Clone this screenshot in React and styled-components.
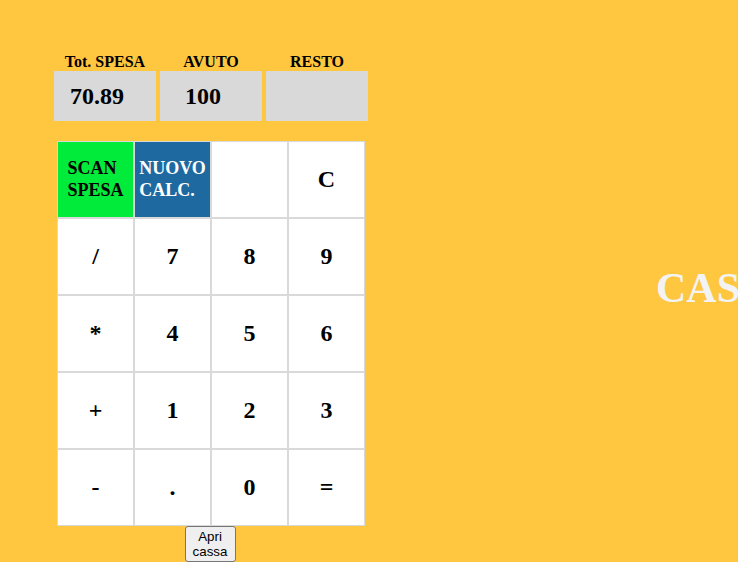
import React from "react";
import styled, { createGlobalStyle } from "styled-components";

const Global = createGlobalStyle`
  html, body {
    margin: 0;
    padding: 0;
    background: #ffc640;
    overflow: hidden;
  }
  body {
    font-family: "Liberation Serif", "Times New Roman", serif;
  }
`;

const Page = styled.div`
  display: flex;
  align-items: flex-start;
  width: 100vw;
  height: 100vh;
  overflow: hidden;
  padding: 53px 0 0 54px;
  box-sizing: border-box;
`;

const Calc = styled.div`
  display: flex;
  flex-direction: column;
  width: 314px;
  flex: none;
`;

const Header = styled.div`
  display: grid;
  grid-template-columns: repeat(3, 102px);
  column-gap: 4px;
`;

const Field = styled.div`
  display: flex;
  flex-direction: column;
`;

const Label = styled.div`
  font-weight: bold;
  font-size: 16px;
  line-height: 17px;
  text-align: center;
  margin-bottom: 1px;
  color: #000;
`;

const Display = styled.div`
  height: 50px;
  background: #d9d9d9;
  display: flex;
  align-items: center;
  justify-content: center;
  padding-right: 16px;
  box-sizing: border-box;
  font-weight: bold;
  font-size: 24px;
  color: #000;
`;

const Keypad = styled.div`
  display: grid;
  grid-template-columns: repeat(4, 77px);
  grid-auto-rows: 77px;
  margin: 20px 0 0 3px;
`;

const Key = styled.div`
  box-sizing: border-box;
  border: 1px solid #d9d9d9;
  background: ${(p) => p.$bg || "#ffffff"};
  color: ${(p) => p.$fg || "#000"};
  display: flex;
  align-items: center;
  justify-content: center;
  font-weight: bold;
  font-size: ${(p) => (p.$small ? "18px" : "24px")};
  line-height: ${(p) => (p.$small ? "21.5px" : "normal")};
  text-align: left;
`;

const ButtonRow = styled.div`
  display: flex;
  justify-content: center;
  margin-left: 2px;
  width: 308px;
`;

const OpenButton = styled.button`
  width: 51px;
  box-sizing: border-box;
  padding: 2px 6px;
  font-family: "Liberation Sans", Arial, sans-serif;
  font-size: 13.33px;
  line-height: 15px;
  color: #000;
  background: #efefef;
  border: 1px solid #767676;
  border-radius: 3px;
`;

const Title = styled.h1`
  margin: 211px 0 0 288px;
  font-size: 42px;
  font-weight: bold;
  color: #f3f3f3;
  white-space: nowrap;
  line-height: normal;
`;

const keys = [
  { t: "SCAN SPESA", bg: "#00eb3a", small: true, lines: ["SCAN", "SPESA"] },
  { t: "NUOVO CALC.", bg: "#1e6aa0", fg: "#ffffff", small: true, lines: ["NUOVO", "CALC."] },
  { t: "" },
  { t: "C" },
  { t: "/" }, { t: "7" }, { t: "8" }, { t: "9" },
  { t: "*" }, { t: "4" }, { t: "5" }, { t: "6" },
  { t: "+" }, { t: "1" }, { t: "2" }, { t: "3" },
  { t: "-" }, { t: "." }, { t: "0" }, { t: "=" },
];

export default function App() {
  return (
    <>
      <Global />
      <Page>
        <Calc>
          <Header>
            <Field>
              <Label>Tot. SPESA</Label>
              <Display>70.89</Display>
            </Field>
            <Field>
              <Label>AVUTO</Label>
              <Display>100</Display>
            </Field>
            <Field>
              <Label>RESTO</Label>
              <Display />
            </Field>
          </Header>
          <Keypad>
            {keys.map((k, i) => (
              <Key key={i} $bg={k.bg} $fg={k.fg} $small={k.small}>
                {k.lines ? (
                  <div>
                    {k.lines[0]}
                    <br />
                    {k.lines[1]}
                  </div>
                ) : (
                  k.t
                )}
              </Key>
            ))}
          </Keypad>
          <ButtonRow>
            <OpenButton>Apri cassa</OpenButton>
          </ButtonRow>
        </Calc>
        <Title>CASSA</Title>
      </Page>
    </>
  );
}
